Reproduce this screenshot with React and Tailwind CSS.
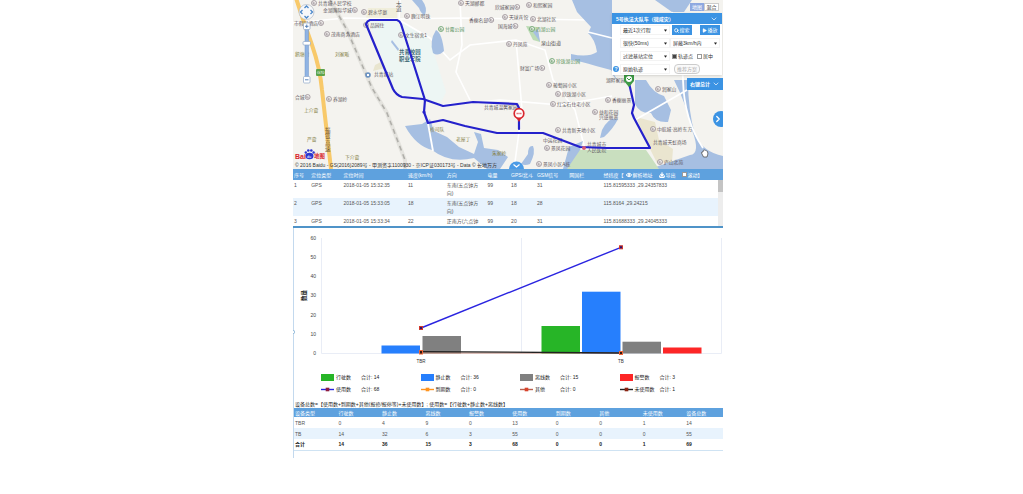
import React from "react";
import { ChevronDown, ChevronRight, Download, Eye, Play, Search } from "lucide-react";

const WATER = "#a6bfe2";

const places = [
  // x, y, text, icon side
  [318, 5, "共青城人民学校", "l"],
  [323, 12, "金湖国际华城", "r"],
  [368, 14, "碧水华庭", "l"],
  [411, 18, "鹿江明珠", "l"],
  [370, 27, "品园住", "l"],
  [294, 25, "市假日酒店", "r"],
  [331, 36, "茂南商务酒店", "l"],
  [405, 37, "文生宿舍1", "l"],
  [374, 76, "共青城站", ""],
  [295, 99, "合城", "r"],
  [333, 101, "养湖岭", "l"],
  [465, 5, "天湖郦都", "l"],
  [495, 9, "欣城家园", "r"],
  [533, 7, "和熙家园", "l"],
  [469, 22, "香榭名邸", "r"],
  [509, 19, "天球宾馆", "l"],
  [537, 21, "北湖社区", "l"],
  [498, 28, "国海城", "r"],
  [513, 46, "丹凤苑", "l"],
  [520, 70, "财富广场", "r"],
  [553, 87, "葡萄园小区", "l"],
  [562, 96, "欣珠湖小区", "l"],
  [557, 106, "红宝石住宅小区", "l"],
  [484, 109, "共青城温馨家园", ""],
  [599, 114, "益和花园", "l"],
  [599, 119, "兴盛丽景", ""],
  [562, 132, "共青新天地小区", "l"],
  [543, 142, "中运花园", ""],
  [551, 150, "景凤花园", "l"],
  [543, 166, "景凤小区A栋", "l"],
  [587, 146, "共青城市", ""],
  [587, 152, "人民医院", ""],
  [606, 82, "湖畔家园", ""],
  [662, 91, "润家山", "l"],
  [612, 102, "香榭丽景", "l"],
  [657, 131, "中航城·高岭东方", "l"],
  [653, 144, "共青城天虹商场", ""],
  [664, 164, "庐山北苑", "l"],
];

const villages = [
  [295, 56, "鹅塘村"],
  [335, 56, "刘家畈"],
  [304, 112, "上介畲"],
  [307, 141, "严畲"],
  [345, 159, "下介畲"],
  [456, 141, "老屋丁"],
  [492, 155, "朱家岭"],
  [430, 131, "桥司队"],
];

const parks = [
  [445, 31, "甘露公园"],
  [536, 31, "西湖公园"],
  [556, 63, "珍珠湖公园"],
];

function Poi({ x, y, park }) {
  return (
    <g fill="none" stroke={park ? "#4f9155" : "#8b8088"} strokeWidth="0.7">
      <circle cx={x} cy={y} r="2.5" fill="#f6f4f2" />
      <path d={`M${x - 0.8} ${y - 1.3}v2.3h2M${x + 0.2} ${y - 0.6}l0.9 1`} />
    </g>
  );
}

function MapCanvas() {
  return (
    <svg
      viewBox="293 0 430 169"
      preserveAspectRatio="xMidYMid slice"
      className="block h-full w-full"
      role="img"
      aria-label="轨迹地图"
    >
      <rect x="293" width="430" height="169" fill="#f4f3ef" />
      <path d="M369 21H397L440 104L402 97L393 88Z" fill="#edf6f4" />
      <path d="M400 20L430 40L446 92L440 105L424 90Z" fill="#edf6f4" />
      <path d="M368 8h29v10h-31z" fill="#f0eedb" />
      <path d="M375 65l6-3 4 6-12 3z" fill="#e9e5cf" />
      <g fill="none" stroke="#fff" strokeWidth="1.6">
        <path d="M293 23L345 18L398 19L460 18L590 20" />
        <path d="M400 0L399 20L430 38L450 60L470 45L516 40L545 50L553 80L575 110L590 169" />
        <path d="M516 40L522 110L514 169" />
        <path d="M440 105L500 100L560 105L612 96" />
        <path d="M460 0L462 45L456 72L470 100" />
      </g>
      <g fill={WATER}>
        <path d="M412 0h10q6 8 3 15q-4-1-6-7z" />
        <path d="M436 30q6 3 8 21q-6 6-11 2q-4-12 3-23z" />
        <path d="M392 40l7 9-1 2-7-9z" />
        <path d="M572 0H612V74L620 84L611 70L596 66Q580 61 571 60L571 54Q588 58 597 52Q595 39 588 33L591 27L577 12Z" />
        <path d="M655 0H692L684 12H672Z" />
        <path d="M635 80H646Q653 93 664 96L671 110L668 122Q655 123 651 113Q640 114 635 104Z" />
        <path d="M674 80H688Q688 110 695 135Q703 152 723 156V169H650L690 155Q701 154 692 130Q686 103 674 80Z" />
        <path d="M602 130Q609 116 618 119Q613 129 604 137L600 138Z" />
        <path d="M405 126L422 124L430 119L434 131L447 137L459 147L474 154L478 142L474 132L481 134L484 148L498 150L508 157L500 169H487L474 158Q450 164 432 150Q416 146 405 126Z" />
        <path d="M528 154q0-9 5-8q3 6-3 18q-5 2-9 0z" />
        <path d="M569 147L583 141L574 169H563Z" />
      </g>
      <path d="M526 26L537 27L540 42L533 40Z" fill="#bcdcb5" />
      <path d="M533 32l5-3 2 13z" fill={WATER} />
      <path d="M580 150H646L659 169H567Z" fill="#c9dfbf" />
      <path d="M636 117L655 122L659 140L673 149L672 162L657 163L648 145Z" fill="#eae5cf" />
      <g fill="none" stroke="#fff" strokeWidth="1.8">
        <path d="M588 32L612 38" />
        <path d="M635 120L687 90" />
        <path d="M672 12Q682 55 683 80Q684 120 703 148" />
        <path d="M427 118L433 151" />
      </g>
      <path
        d="M330 0L347 30L372 88L387 113L405 160V169"
        fill="none"
        stroke="#e4e3de"
        strokeWidth="4"
      />
      <path
        d="M330 0L347 30L372 88L387 113L405 160V169"
        fill="none"
        stroke="#b0afaa"
        strokeWidth="1.6"
        strokeDasharray="5 4"
      />
      <path
        d="M296 -2Q303 20 312 45Q320 68 322 90L331 169"
        fill="none"
        stroke="#f8c96a"
        strokeWidth="4"
      />
      <rect x="316" y="69" width="9" height="7" rx="1" fill="#5da34b" />
      <text x="317" y="74" fontSize="4" fill="#fff">G70</text>

      <g fontSize="4.8" fill="#5f5960">
        {places.map(([x, y, t, side]) => (
          <g key={t}>
            <text x={x} y={y}>{t}</text>
            {side === "l" && <Poi x={x - 4} y={y - 2} />}
            {side === "r" && <Poi x={x + t.length * 4.8 + 3} y={y - 2} />}
          </g>
        ))}
      </g>
      <g fontSize="4.8" fill="#88844c">
        {villages.map(([x, y, t]) => (
          <text key={t} x={x} y={y}>{t}</text>
        ))}
      </g>
      <g fontSize="4.8" fill="#58925c">
        {parks.map(([x, y, t]) => (
          <g key={t}>
            <text x={x} y={y}>{t}</text>
            <Poi x={x - 4} y={y - 2} park />
          </g>
        ))}
      </g>
      <circle cx="368" cy="75" r="2.8" fill="#6c93c2" />
      <path d="M367 74h2v2h-2z" fill="#fff" />
      <text x="541" y="45" fontSize="5" fill="#444">泉山街道</text>
      <g fontSize="5.4" fontWeight="700" fill="#3f6a76">
        <text x="399" y="54">共青校园</text>
        <text x="399" y="61">职业学院</text>
      </g>
      <g fontSize="5.5" fill="#555">
        <text x="396" y="5.500">大</text>
        <text x="396" y="11">道</text>
      </g>
      <g fontSize="5.5" fill="#6a5433">
        {["福", "银", "高", "速"].map((c, i) => (
          <text key={c} x="325" y={132 + i * 6.4}>{c}</text>
        ))}
      </g>

      <g fill="none" stroke="#2421cb" strokeWidth="2.2" strokeLinejoin="round" strokeLinecap="round">
        <path d="M519 129V108L517 104L473 102L443 106L423 99L402 97Q396 95 393 89L366 24Q367 21 370 20L397 20Q400 21 401 24L425 100L424 112L428 123L443 120L465 126L497 133H543L580 147L607 148H650L634 118L632 113L634 105L629 83" />
      </g>
      <circle cx="424" cy="112" r="1.6" fill="#2421cb" />
      <circle cx="584" cy="148" r="2" fill="#d55a78" />

      <path d="M519 122L515 116h8z" fill="#d9262f" />
      <circle cx="519" cy="113.500" r="4.800" fill="#fff" stroke="#d9262f" strokeWidth="1.700" />
      <path d="M516.500 113.500h5" stroke="#e06a70" strokeWidth="1.400" strokeDasharray="1.4 0.4" />
      <path d="M629 87L624 81V74H634V81Z" fill="#3e9a45" />
      <circle cx="629" cy="79" r="3" fill="#fff" />
      <path d="M627 78l2 2 2-2" fill="none" stroke="#3e9a45" />

      <g>
        <rect x="305" y="25" width="3.500" height="54" rx="1.500" fill="#8fb3e3" stroke="#6f95cb" strokeWidth="0.500" />
        <circle cx="306.500" cy="12" r="7.500" fill="#f7f8fa" stroke="#b9c0ca" strokeWidth="0.800" />
        <g fill="none" stroke="#4a87c9" strokeWidth="1.300">
          <path d="M304.500 8l2-2 2 2M304.500 16l2 2 2-2M302.500 10l-2 2 2 2M310.500 10l2 2-2 2" />
        </g>
        <g fill="#fff" stroke="#8ea6c8" strokeWidth="0.700">
          <rect x="303.500" y="23" width="6.500" height="6.500" rx="1" />
          <rect x="303.500" y="76.500" width="6.500" height="6.500" rx="1" />
          <rect x="303" y="41.500" width="7.500" height="3.500" rx="1" />
        </g>
        <path d="M305 26.300h3.500M306.750 24.500v3.500M305 79.800h3.500" stroke="#4a78b4" strokeWidth="0.900" />
      </g>

      <g fontWeight="700" fontSize="7">
        <text x="295" y="159" fill="#d8252c">Bai</text>
        <text x="314" y="158" fontSize="5.400" fill="#d8252c">地图</text>
      </g>
      <g fill="#2c37cf">
        <ellipse cx="309.500" cy="156" rx="4" ry="3.300" />
        <circle cx="305.800" cy="152.500" r="1.200" />
        <circle cx="308.300" cy="150.500" r="1.300" />
        <circle cx="311.300" cy="150.500" r="1.300" />
        <circle cx="313.600" cy="152.500" r="1.200" />
      </g>
      <text x="307" y="158" fontSize="3.800" fill="#fff">du</text>
      <text x="295" y="166.500" fontSize="5" fill="#333">
        © 2016 Baidu - GS(2016)2089号 - 甲测资字1100930 - 京ICP证030173号 - Data © 长地万方
      </text>
      <path
        d="M703.500 157l-2-4q0-1.500 1.500-1q0-2.500 1.500-2t1.500 0.500t1.500 1q1 2-0.500 5.500z"
        fill="#fff"
        stroke="#444"
        strokeWidth="0.700"
      />
      <path d="M509 169a7.500 7.500 0 0 1 15 0z" fill="#4b9be6" />
      <path d="M513.500 164.500l3 2.500 3-2.500" fill="none" stroke="#fff" strokeWidth="1.100" />
    </svg>
  );
}

function Tick({ children, checked }) {
  return (
    <label className="flex shrink-0 items-center gap-px">
      <input
        type="checkbox"
        defaultChecked={checked}
        className="size-[5px] shrink-0 appearance-none border border-[#999] bg-white checked:bg-[#444]"
      />
      {children}
    </label>
  );
}

function Drop({ label, value }) {
  return (
    <label className="relative flex h-2.5 min-w-0 items-center border border-[#f3f3f3] bg-white">
      <select
        aria-label={label}
        className="w-full appearance-none bg-transparent pl-0.5 leading-[8px] text-[#333] outline-none"
      >
        <option>{value}</option>
      </select>
      <svg viewBox="0 0 4 3" className="pointer-events-none absolute right-0.5 h-[3px] w-[3px]">
        <path d="M0 0h4L2 3z" fill="#222" />
      </svg>
    </label>
  );
}

function ControlPanel() {
  return (
    <section className="w-[110px] bg-white shadow-sm">
      <h2 className="flex h-[11px] items-center justify-between bg-[#3b93e3] px-1 font-bold text-white">
        5号执法大队车（微咸灾）
        <ChevronDown className="size-2" />
      </h2>
      <div className="grid grid-cols-[8px_50px_1fr] items-center gap-y-[3px] py-px pr-0.5">
        <span />
        <Drop label="行程" value="最近1次行程" />
        <div className="flex justify-between pl-0.5 text-white">
          <button className="flex h-2.5 w-5 items-center justify-center bg-[#3b93e3]">
            <Search className="size-[5px]" strokeWidth={4} />搜索
          </button>
          <button className="flex h-2.5 w-5 items-center justify-center bg-[#3b93e3]">
            <Play className="size-[5px]" fill="white" />播放
          </button>
        </div>
        <span />
        <Drop label="播放速度" value="很快(50ms)" />
        <Drop label="速度过滤" value="屏蔽3km/h内" />
        <span />
        <Drop label="定位过滤" value="过滤基站定位" />
        <div className="flex items-center gap-1 pl-0.5">
          <Tick checked>轨迹点</Tick>
          <Tick>居中</Tick>
        </div>
        <span className="ml-px flex size-[6px] items-center justify-center rounded-full bg-[#3b93e3] font-bold text-white">
          ?
        </span>
        <Drop label="轨迹类型" value="原始轨迹" />
        <div className="flex pl-1">
          <button className="h-2.5 rounded-sm border border-[#ccc] bg-[#fafafa] px-0.5 leading-[8px] text-[#aaa]">
            推荐方案
          </button>
        </div>
      </div>
    </section>
  );
}

const tracks = [
  ["1", "GPS", "2018-01-05 15:32:35", "11", "东南(五点钟方向)", "99", "18", "31", "", "115.81595333 ,29.24357833"],
  ["2", "GPS", "2018-01-05 15:33:05", "18", "东南(五点钟方向)", "99", "18", "28", "", "115.8164 ,29.24215"],
  ["3", "GPS", "2018-01-05 15:33:34", "22", "正南方(六点钟", "99", "20", "31", "", "115.81688333 ,29.24045333"],
];

function TrackTable() {
  return (
    <div className="relative h-[57px] overflow-hidden">
      <table className="w-full table-fixed text-left text-[#555]">
        <colgroup>
          <col className="w-[4%]" />
          <col className="w-[7.5%]" />
          <col className="w-[15%]" />
          <col className="w-[9%]" />
          <col className="w-[9.5%]" />
          <col className="w-[5.5%]" />
          <col className="w-[6%]" />
          <col className="w-[7.5%]" />
          <col className="w-[8%]" />
          <col className="w-[28%]" />
        </colgroup>
        <thead className="bg-[#5ea1de] text-white">
          <tr className="h-[11px] whitespace-nowrap">
            {["序号", "定位类型", "定位时间", "速度(km/h)", "方向", "电量", "GPS/北斗", "GSM信号", "网国栏"].map((h) => (
              <th key={h} className="pl-px font-normal">{h}</th>
            ))}
            <th className="pl-px font-normal">
              <span className="flex items-center">
                <span className="shrink-0">经纬度【</span>
                <a href="#address" className="mr-1.5 ml-0.5 flex shrink-0 items-center gap-px">
                  <Eye className="size-[6px] shrink-0" strokeWidth={4} />解析地址
                </a>
                <a href="#export" className="mr-1.5 flex shrink-0 items-center gap-px">
                  <Download className="size-[6px] shrink-0" strokeWidth={5} />导出
                </a>
                <Tick>滚动】</Tick>
              </span>
            </th>
          </tr>
        </thead>
        <tbody>
          {tracks.map((r) => (
            <tr key={r[0]} className="h-[18px] align-top leading-[8px] even:bg-[#e8f3fd]">
              {r.map((c, i) => (
                <td key={i} className={i === 4 ? "py-px pr-1 pl-px" : "py-px pl-px"}>{c}</td>
              ))}
            </tr>
          ))}
        </tbody>
      </table>
      <div className="absolute top-[11px] right-0 bottom-0 w-[5px] bg-[#ededed]">
        <div className="h-3 bg-[#c4c4c4]" />
      </div>
    </div>
  );
}

function Chart() {
  return (
    <svg viewBox="293 228 430 142" className="block w-full" role="img" aria-label="数量统计图">
      <g stroke="#e9edf6" strokeWidth="1">
        <path d="M321.500 238V353.500H721.500V238M521.500 238V353.500" fill="none" />
      </g>
      <g fontSize="5" fill="#444" textAnchor="end">
        {[60, 50, 40, 30, 20, 10, 0].map((v) => (
          <text key={v} x="316" y={355 - v * 1.917}>{v}</text>
        ))}
      </g>
      <text transform="translate(306 301) rotate(-90)" fontSize="5.500" fontWeight="700" fill="#222">数量</text>
      <rect x="381.500" y="345.500" width="38.500" height="8" fill="#267ffd" />
      <rect x="422.500" y="336" width="38.500" height="17.500" fill="#808080" />
      <rect x="541.500" y="326" width="38.500" height="27.500" fill="#27b527" />
      <rect x="582" y="291.700" width="38.500" height="61.800" fill="#267ffd" />
      <rect x="622.500" y="341.700" width="38.500" height="11.800" fill="#808080" />
      <rect x="663" y="347.500" width="38.500" height="6" fill="#fd2626" />
      <path d="M421 328L621 247.300" stroke="#2a24e0" strokeWidth="1.400" />
      <path d="M421 353H621" stroke="#c98a74" strokeWidth="1" />
      <path d="M421 351.600L621 353" stroke="#222" strokeWidth="1.300" />
      <g fill="#2a1470" stroke="#d1382c" strokeWidth="1">
        <rect x="419.500" y="326.500" width="3" height="3" />
        <rect x="619.500" y="245.800" width="3" height="3" />
      </g>
      <g fill="#33180f" stroke="#ef6537" strokeWidth="1">
        <rect x="419.500" y="350.500" width="3" height="3.500" />
        <rect x="619.500" y="351.500" width="3" height="3" />
      </g>
      <g fontSize="4.500" fill="#333" textAnchor="middle">
        <text x="421" y="363">TBR</text>
        <text x="621" y="363">TB</text>
      </g>
    </svg>
  );
}

const legend = [
  { name: "行驶数", total: 14, fill: "#27b527" },
  { name: "静止数", total: 36, fill: "#267ffd" },
  { name: "离线数", total: 15, fill: "#808080" },
  { name: "报警数", total: 3, fill: "#fd2626" },
  { name: "使用数", total: 68, line: "#2a24e0", dot: "#8f1d3f" },
  { name: "到期数", total: 0, line: "#ff9420", dot: "#ff9420" },
  { name: "其他", total: 0, line: "#b9604e", dot: "#d8442c" },
  { name: "未使用数", total: 1, line: "#222", dot: "#8a2412" },
];

function Legend() {
  return (
    <ul className="grid grid-cols-4 gap-y-1 pt-[3px] pr-1 pl-7 text-[#222]">
      {legend.map((l) => (
        <li key={l.name} className="flex h-2 items-center gap-0.5">
          <svg viewBox="0 0 13 7" className="h-[7px] w-[13px]">
            {l.fill ? (
              <rect width="13" height="7" fill={l.fill} />
            ) : (
              <>
                <path d="M0 3.500h13" stroke={l.line} strokeWidth="1.400" />
                <rect x="4.700" y="1.700" width="3.600" height="3.600" fill={l.dot} />
              </>
            )}
          </svg>
          <span className="min-w-[23px]">{l.name}</span>
          <span>合计: {l.total}</span>
        </li>
      ))}
    </ul>
  );
}

const heads = ["设备类型", "行驶数", "静止数", "离线数", "报警数", "使用数", "到期数", "其他", "未使用数", "设备总数"];
const summary = [
  ["TBR", 0, 4, 9, 0, 13, 0, 0, 1, 14],
  ["TB", 14, 32, 6, 3, 55, 0, 0, 0, 55],
];
const totals = ["合计", 14, 36, 15, 3, 68, 0, 0, 1, 69];

function SummaryTable() {
  return (
    <table className="w-full table-fixed border-b border-[#cfe3f3] text-left text-[#555]">
      <thead className="bg-[#5ea1de] text-white">
        <tr className="h-[9px]">
          {heads.map((h) => (
            <th key={h} className="pl-0.5 font-normal whitespace-nowrap last:w-[9%]">{h}</th>
          ))}
        </tr>
      </thead>
      <tbody>
        {summary.map((r) => (
          <tr key={r[0]} className="h-[11px] even:bg-[#e8f3fd]">
            {r.map((c, i) => (
              <td key={i} className="pl-0.5">{c}</td>
            ))}
          </tr>
        ))}
      </tbody>
      <tfoot>
        <tr className="h-[11px] font-bold text-[#222]">
          {totals.map((c, i) => (
            <td key={i} className="pl-0.5">{c}</td>
          ))}
        </tr>
      </tfoot>
    </table>
  );
}

export default function App() {
  return (
    <div className="min-h-screen bg-white pr-[7px] font-['Liberation_Sans','Noto_Sans_CJK_SC',sans-serif] text-[5px] leading-[8px] text-[#333]">
      <main className="mx-auto max-w-[430px]">
        <div className="relative h-[169px] overflow-hidden">
          <MapCanvas />
          <div className="absolute top-[3px] right-1 flex">
            <button className="h-2 w-[14px] bg-[#8ea8e0] text-white">地图</button>
            <button className="h-2 w-[15px] border border-[#ccc] bg-white leading-[6px]">混合</button>
          </div>
          <div className="absolute top-[13px] right-px">
            <ControlPanel />
          </div>
          <button className="absolute top-[78px] right-0 flex h-3 w-9 items-center justify-center gap-0.5 bg-[#3b93e3] font-bold text-white">
            右键总计
            <ChevronDown className="size-2" />
          </button>
          <button
            aria-label="展开"
            className="absolute top-[111px] -right-1.5 flex size-4 items-center rounded-full bg-[#3b93e3] text-white"
          >
            <ChevronRight className="size-2.5" strokeWidth={3} />
          </button>
        </div>
        <TrackTable />
        <div className="border-t-2 border-[#4f93c8]" />
        <div className="relative pb-[7px]">
          <Chart />
          <Legend />
          <p className="mt-[7px] pl-0.5 whitespace-nowrap text-[#222]">
            设备总数=【使用数+到期数+其他(报修/报停等)+未使用数】; 使用数=【行驶数+静止数+离线数】
          </p>
          <SummaryTable />
          <div className="absolute inset-y-0 left-0 w-px bg-[#c3d9ee]" />
          <div className="absolute top-[102px] left-0 h-1 w-0.5 rounded-r-full border border-l-0 border-[#8fb9d8] bg-white" />
        </div>
      </main>
    </div>
  );
}
